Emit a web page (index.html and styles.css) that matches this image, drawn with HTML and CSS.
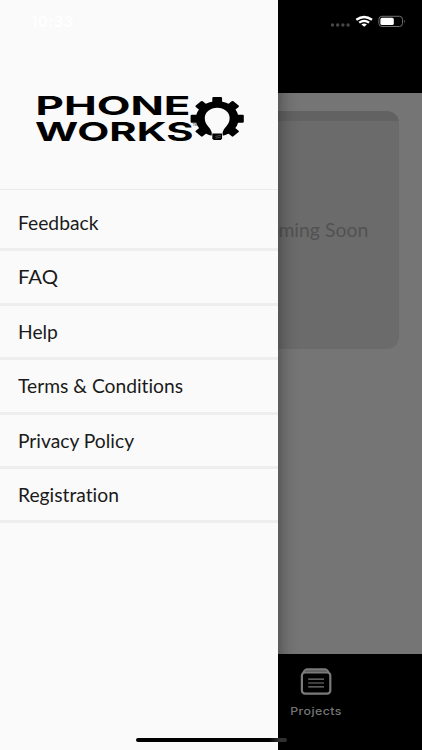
FILE: index.html
```html
<!DOCTYPE html>
<html lang="en">
<head>
<meta charset="UTF-8">
<meta name="viewport" content="width=device-width, initial-scale=1.0">
<title>Phone Works</title>
<link rel="stylesheet" href="styles.css">
</head>
<body>
<div class="screen">
  <div class="page">
    <header class="page-header"></header>
    <main class="page-body">
      <section class="card">
        <p class="card-text">Coming Soon</p>
      </section>
    </main>
    <nav class="tabbar">
      <a class="tab">
        <svg class="tab-icon" width="32" height="28" viewBox="0 0 32 28" fill="none" stroke="#7b7b7b">
          <rect x="1.9" y="4.3" width="28.4" height="21.3" rx="3.2" stroke-width="2.2"/>
          <path d="M3.2 4.2 L5.5 1.7 Q6.2 1.1 7.2 1.1 H24.8 Q25.8 1.1 26.5 1.7 L28.8 4.2" stroke-width="1.8"/>
          <path d="M5 2.7 H27" stroke-width="1"/>
          <path d="M8.2 11.2 H24 M8.2 15 H24 M8.2 18.8 H24" stroke-width="1.2"/>
        </svg>
        <span class="tab-label">Projects</span>
      </a>
    </nav>
  </div>

  <aside class="drawer">
    <div class="drawer-header">
      <svg class="logo" width="210" height="66" viewBox="0 -8 210 66">
        <text class="logo-text" x="0.5" y="20" textLength="155" lengthAdjust="spacingAndGlyphs">PHONE</text>
        <text class="logo-text" x="0" y="46.3" textLength="158.5" lengthAdjust="spacingAndGlyphs">WORKS</text>
        <text class="logo-tm" x="157.5" y="31">TM</text>
        <g transform="translate(182.2 23.8) scale(1.22 1)">
          <circle r="17.6"/>
          <rect class="tooth" x="-4" y="-21.8" width="8" height="8" rx="1"/>
          <rect class="tooth" x="-4" y="-21.8" width="8" height="8" rx="1" transform="rotate(45)"/>
          <rect class="tooth" x="-4" y="-21.8" width="8" height="8" rx="1" transform="rotate(90)"/>
          <rect class="tooth" x="-4" y="-21.8" width="8" height="8" rx="1" transform="rotate(135)"/>
          <rect class="tooth" x="-4" y="-21.8" width="8" height="8" rx="1" transform="rotate(225)"/>
          <rect class="tooth" x="-4" y="-21.8" width="8" height="8" rx="1" transform="rotate(270)"/>
          <rect class="tooth" x="-4" y="-21.8" width="8" height="8" rx="1" transform="rotate(315)"/>
          <path class="bulb" d="M-4.8 18.5 L-4.4 14.5 C-4.6 9 -10.2 7 -10.2 -.8 A10.2 10.2 0 0 1 10.2 -.8 C10.2 7 4.6 9 4.4 14.5 L4.8 18.5 Z"/>
          <path d="M-4 14.6 H4 V20 L2.8 21.3 H-2.8 L-4 20 Z"/>
          <path d="M-1.5 17.6 L3 16.6 M-1.5 19.4 L3 18.4" stroke="#777" stroke-width=".6"/>
        </g>
      </svg>
    </div>
    <ul class="menu">
      <li class="menu-item"><span class="label">Feedback</span></li>
      <li class="menu-item"><span class="label label-wide">FAQ</span></li>
      <li class="menu-item"><span class="label">Help</span></li>
      <li class="menu-item"><span class="label">Terms &amp; Conditions</span></li>
      <li class="menu-item"><span class="label">Privacy Policy</span></li>
      <li class="menu-item"><span class="label">Registration</span></li>
    </ul>
  </aside>

  <div class="statusbar">
    <span class="clock">10:33</span>
    <svg width="78" height="16" viewBox="0 0 78 16">
      <g fill="#484848">
        <circle cx="2.5" cy="11" r="1.7"/>
        <circle cx="7.7" cy="11" r="1.7"/>
        <circle cx="12.9" cy="11" r="1.7"/>
        <circle cx="18.1" cy="11" r="1.7"/>
      </g>
      <g fill="none" stroke="#fff" stroke-width="2.3">
        <path d="M26.3 5.8 Q34.2 .2 42 5.8"/>
        <path d="M29.2 8.7 Q34.2 5 39.1 8.7"/>
      </g>
      <path d="M31.4 10.6 Q34.2 8.6 36.9 10.6 L34.2 12.8 Z" fill="#fff"/>
      <rect x="48.9" y="2.3" width="23.6" height="10.2" rx="3" fill="none" stroke="#707070" stroke-width="1"/>
      <rect x="50.4" y="3.8" width="13.4" height="7.2" rx="1.6" fill="#fff"/>
      <path d="M74 5.6 Q75.8 7.4 74 9.2 Z" fill="#707070"/>
    </svg>
  </div>
  <div class="home-indicator"></div>
</div>
</body>
</html>
```
FILE: styles.css
```css
body {
  margin: 0;
  font-family: Lato, sans-serif;
  background-color: #000;
}
.screen {
  position: relative;
  width: 422px;
  height: 750px;
  overflow: hidden;
}

/* page under the drawer */
.page {
  display: flex;
  flex-direction: column;
  height: 100%;
}
.page-header {
  height: 92.5px;
  background-color: #000;
}
.page-body {
  flex: 1;
  padding: 18px 23px;
  background-color: #757575;
}
.card {
  box-sizing: border-box;
  display: flex;
  align-items: center;
  justify-content: flex-end;
  height: 238.5px;
  padding-right: 31px;
  border-radius: 12px;
  background: linear-gradient(#626262 10px, #6b6b6b 10px);
}
.card-text {
  margin: 0;
  font-size: 18.5px;
  line-height: 22px;
  color: #525252;
  transform: scaleX(1.05);
  transform-origin: right;
}
.tabbar {
  box-sizing: border-box;
  height: 96px;
  padding: 14px 0 0 276px;
  background-color: #000;
}
.tab {
  display: flex;
  flex-direction: column;
  align-items: center;
  width: 80px;
}
.tab-label {
  margin-top: 7px;
  font-family: Inter, sans-serif;
  font-size: 11px;
  font-weight: 500;
  line-height: 16px;
  letter-spacing: 0.4px;
  color: #777;
  transform: scaleX(1.12);
}

/* drawer */
.drawer {
  position: absolute;
  top: 0;
  left: 0;
  width: 278px;
  height: 100%;
  background-color: #fafafa;
  box-shadow: 0 0 18px rgba(0, 0, 0, 0.45);
}
.drawer-header {
  box-sizing: border-box;
  height: 190px;
  padding: 87px 0 0 35px;
  border-bottom: 1px solid #ebebeb;
}
.logo {
  display: block;
}
.logo-text {
  font-family: Inter, sans-serif;
  font-size: 26px;
  font-weight: 700;
}
.logo-tm {
  font-family: Inter, sans-serif;
  font-size: 3px;
}
.bulb {
  fill: #fafafa;
}
.menu {
  margin: 0;
  padding: 7px 0 0;
  list-style: none;
}
.menu-item {
  box-sizing: border-box;
  height: 54.4px;
  padding-left: 18px;
  border-bottom: 3px solid #eee;
  font-size: 18.5px;
  line-height: 52px;
  font-variant-ligatures: none;
  color: #1a1a1a;
}
.label {
  display: inline-block;
  transform: scaleX(1.04);
  transform-origin: left;
}
.label-wide {
  transform: scaleX(1.1);
}

/* system overlays */
.statusbar {
  position: absolute;
  top: 0;
  left: 0;
  box-sizing: border-box;
  display: flex;
  justify-content: space-between;
  width: 100%;
  padding: 14px 14px 0 31px;
}
.clock {
  font-family: Inter, sans-serif;
  font-size: 15px;
  font-weight: 600;
  line-height: 16px;
  letter-spacing: 0.6px;
  color: #fff;
}
.home-indicator {
  position: absolute;
  left: 136px;
  bottom: 8px;
  width: 151px;
  height: 4px;
  border-radius: 2px;
  background: linear-gradient(to right, #000 88%, #303030 95%);
}
```
